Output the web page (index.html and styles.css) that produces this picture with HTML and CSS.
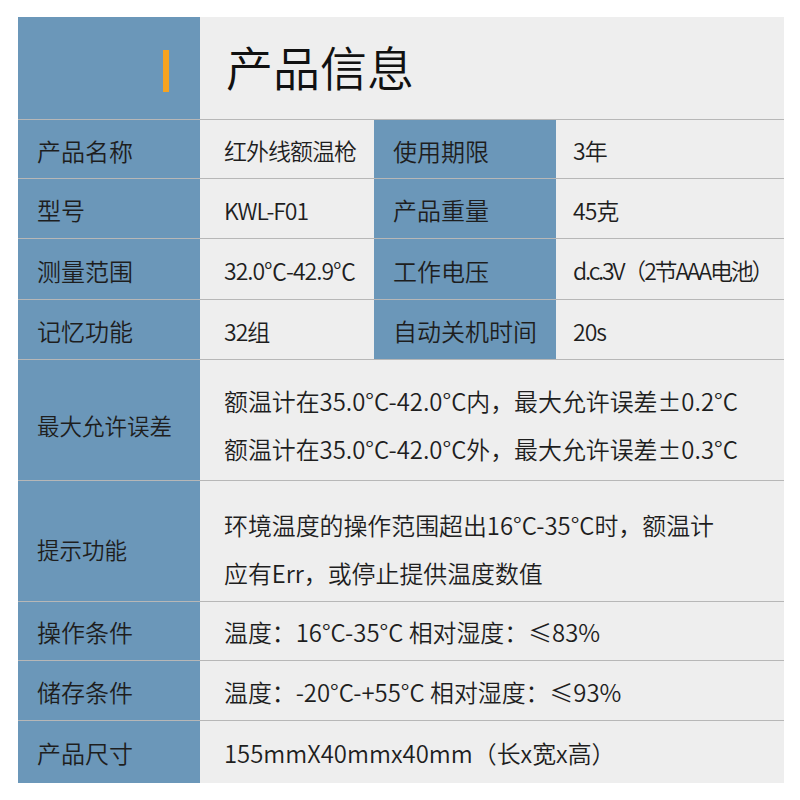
FILE: index.html
```html
<!DOCTYPE html>
<html lang="zh">
<head>
<meta charset="utf-8">
<link rel="stylesheet" href="styles.css">
</head>
<body>
<div class="sheet">
  <div class="cell label head-mark"><span class="bar"></span></div>
  <div class="cell value title span3">产品信息</div>

  <div class="cell label r1">产品名称</div>
  <div class="cell value tight r1">红外线额温枪</div>
  <div class="cell label label2 r1">使用期限</div>
  <div class="cell value tight v2 r1">3年</div>

  <div class="cell label r1">型号</div>
  <div class="cell value tight r1">KWL-F01</div>
  <div class="cell label label2 r1">产品重量</div>
  <div class="cell value tight v2 r1">45克</div>

  <div class="cell label r1">测量范围</div>
  <div class="cell value tight r1">32.0℃-42.9℃</div>
  <div class="cell label label2 r1">工作电压</div>
  <div class="cell value tight v2 r1 squeeze">d.c.3V（2节AAA电池）</div>

  <div class="cell label r1">记忆功能</div>
  <div class="cell value tight r1">32组</div>
  <div class="cell label label2 r1">自动关机时间</div>
  <div class="cell value tight v2 r1">20s</div>

  <div class="cell label small r5">最大允许误差</div>
  <div class="cell value wide span3 r5">
    <div class="line">额温计在35.0°C-42.0°C内，最大允许误差±0.2°C</div>
    <div class="line">额温计在35.0°C-42.0°C外，最大允许误差±0.3°C</div>
  </div>

  <div class="cell label small r6">提示功能</div>
  <div class="cell value wide span3 r6">
    <div class="line">环境温度的操作范围超出16°C-35°C时，额温计</div>
    <div class="line">应有Err，或停止提供温度数值</div>
  </div>

  <div class="cell label r7">操作条件</div>
  <div class="cell value wide span3 r7">温度：16°C-35°C 相对湿度：≤83%</div>

  <div class="cell label r7">储存条件</div>
  <div class="cell value wide span3 r7">温度：-20°C-+55°C 相对湿度：≤93%</div>

  <div class="cell label r7">产品尺寸</div>
  <div class="cell value wide span3 r7">155mmX40mmx40mm（长x宽x高）</div>
</div>
</body>
</html>
```

FILE: styles.css
```css
html, body {
  margin: 0;
  padding: 0;
  background: #ffffff;
}

body {
  font-family: "Noto Sans CJK SC", "Noto Sans", sans-serif;
  font-weight: 350;
  color: #1e1e1e;
}

.sheet {
  margin: 17px 0 0 18px;
  width: 766px;
  display: grid;
  grid-template-columns: 182px 174px 182px 228px;
  grid-template-rows: 102px 59px 60px 61px 60px 121px 121px 59px 60px 63px;
}

.cell {
  box-sizing: border-box;
  display: flex;
  align-items: center;
  border-top: 1px solid #b7b7b7;
  white-space: nowrap;
}

.label {
  background: #6b97b9;
  padding-left: 19px;
  font-size: 24px;
}

.label.small {
  font-size: 22.5px;
}

.value {
  background: #eeeeee;
  padding-left: 24px;
}

.tight {
  font-size: 23px;
  letter-spacing: -1px;
}

.squeeze {
  letter-spacing: -2.2px;
}

.v2 {
  padding-left: 17px;
}

.wide {
  font-size: 23.9px;
}

.span3 {
  grid-column: span 3;
}

.head-mark,
.title {
  border-top: none;
}

.head-mark {
  justify-content: flex-end;
  padding-right: 31px;
  padding-top: 6px;
}

.bar {
  display: block;
  width: 6px;
  height: 42px;
  background: #f5a321;
}

.title {
  padding-left: 26px;
  padding-bottom: 6px;
  font-size: 47px;
  color: #111111;
}

.r1 {
  padding-top: 2px;
}

.r5 {
  padding-top: 10px;
}

.r6 {
  padding-top: 16px;
}

.r7 {
  padding-top: 1px;
}

.wide.r5,
.wide.r6 {
  flex-direction: column;
  align-items: flex-start;
  justify-content: center;
}

.line {
  line-height: 48px;
}
```
